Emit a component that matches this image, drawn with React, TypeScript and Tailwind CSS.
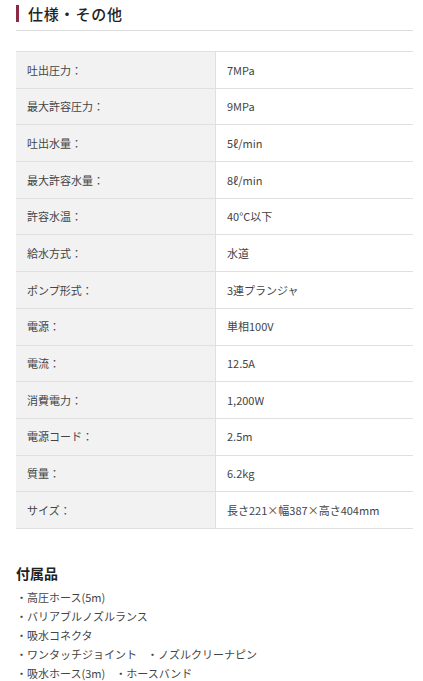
const specs: [string, string][] = [
  ['吐出圧力：', '7MPa'],
  ['最大許容圧力：', '9MPa'],
  ['吐出水量：', '5ℓ/min'],
  ['最大許容水量：', '8ℓ/min'],
  ['許容水温：', '40°C以下'],
  ['給水方式：', '水道'],
  ['ポンプ形式：', '3連プランジャ'],
  ['電源：', '単相100V'],
  ['電流：', '12.5A'],
  ['消費電力：', '1,200W'],
  ['電源コード：', '2.5m'],
  ['質量：', '6.2kg'],
  ['サイズ：', '長さ221×幅387×高さ404mm'],
];

const accessories = [
  ['高圧ホース(5m)'],
  ['バリアブルノズルランス'],
  ['吸水コネクタ'],
  ['ワンタッチジョイント', 'ノズルクリーナピン'],
  ['吸水ホース(3m)', 'ホースバンド'],
];

export default function App() {
  return (
    <div
      className="bg-white w-[423px] h-[681px] overflow-hidden text-[#333]"
      style={{ fontFamily: '"Noto Sans CJK JP", "Noto Sans", sans-serif' }}
    >
      <div className="pl-4 pr-[10px]">
        <div className="flex items-center h-[31px] border-b border-[#dcdcdc] pb-[3px]">
          <div className="w-[3px] h-[17px] bg-[#8c2a45] mr-[9px]" />
          <h2 className="text-[15px] font-medium text-[#222] leading-none tracking-[0.8px]">仕様・その他</h2>
        </div>

        <div className="mt-[20px] border-t border-[#e0e0e0]">
          {specs.map(([label, value]) => (
            <div key={label} className="flex h-[36.7px] border-b border-[#e0e0e0]">
              <div className="w-[200px] bg-[#f2f2f2] border-r border-[#e0e0e0] flex items-center pl-[11px] text-[11px] text-[#444]">
                {label}
              </div>
              <div className="flex-1 flex items-center pl-[11px] text-[11px] text-[#444]">
                {value}
              </div>
            </div>
          ))}
        </div>

        <h3 className="mt-[34px] text-[14px] font-bold text-[#222] leading-[20px]">付属品</h3>
        <ul className="mt-[5px] text-[11px] text-[#444]">
          {accessories.map((items, i) => (
            <li key={i} className="h-[19px] flex items-center gap-[10px]">
              {items.map((item) => (
                <span key={item}>・{item}</span>
              ))}
            </li>
          ))}
        </ul>
      </div>
    </div>
  );
}
